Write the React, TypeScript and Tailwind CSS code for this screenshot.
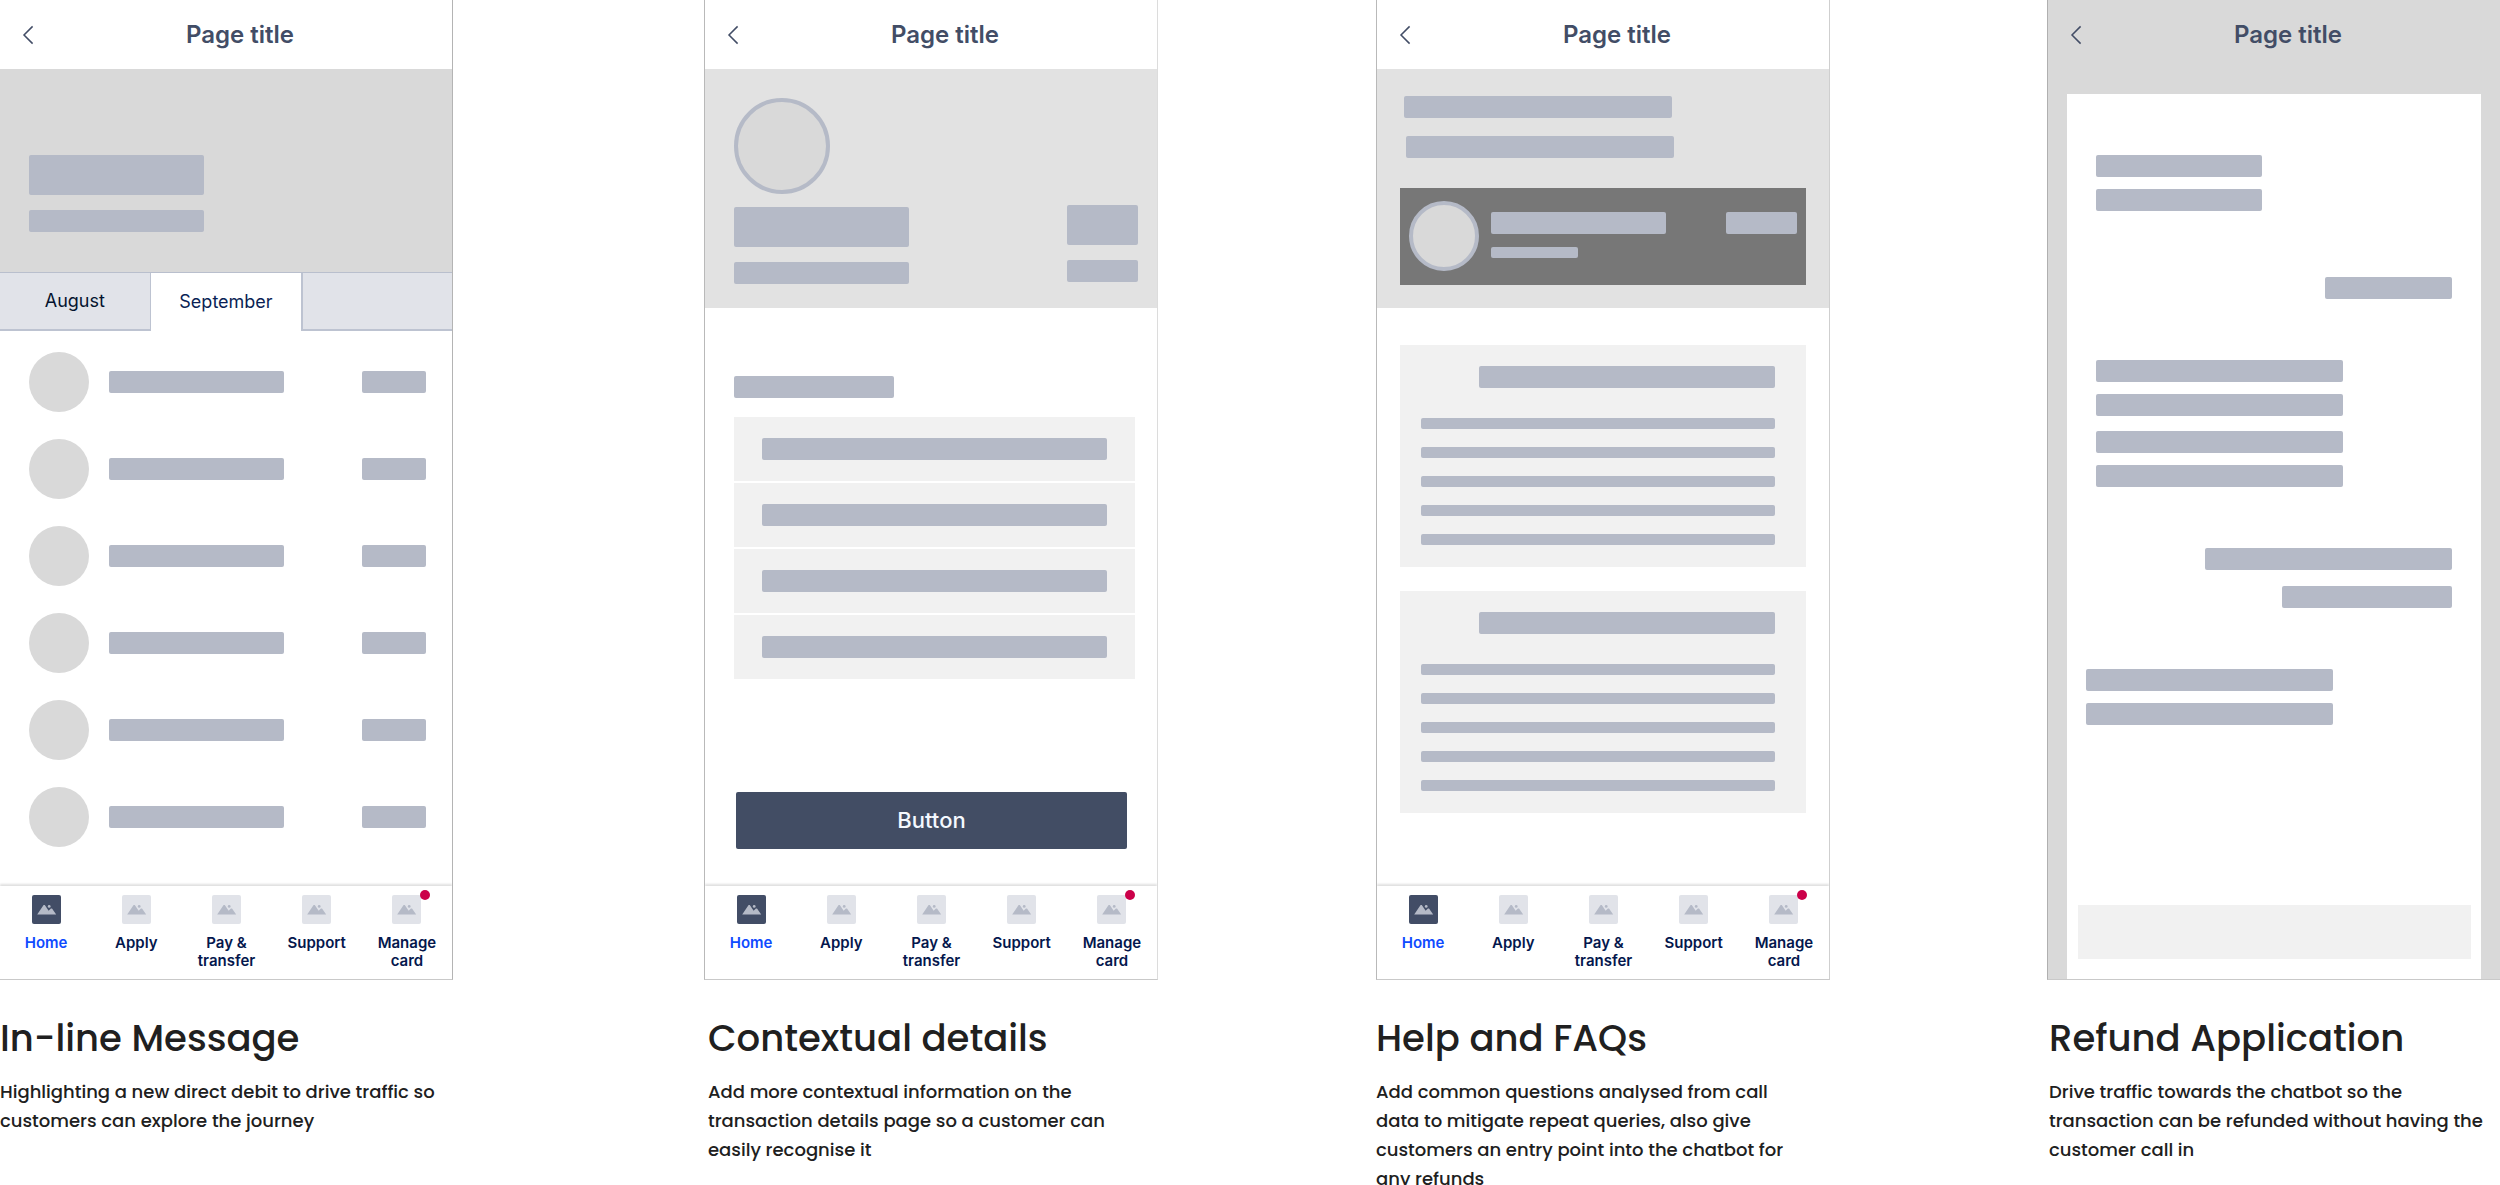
import React from "react";

function cx(...parts: (string | false | undefined)[]) {
  return parts.filter(Boolean).join(" ");
}

/* Placeholder block standing in for a line of content. */
function Bar({ className }: { className?: string }) {
  return <div className={cx("shrink-0 rounded-[2px] bg-[#b5bac7]", className)} />;
}

function Header({ tall }: { tall?: boolean }) {
  return (
    <header className={cx("flex h-[69px] items-center pl-5", tall && "mb-[25px]")}>
      <button type="button" aria-label="Back" className="flex h-8 w-4 items-center justify-center">
        <svg width="16" height="20" viewBox="0 0 16 20" fill="none">
          <path d="M12.6 1.4 L4 10 L12.6 18.6" stroke="#424d66" strokeWidth="1.5" />
        </svg>
      </button>
      <h1 className="flex-1 pr-2 text-center text-2xl font-semibold text-[#424d66]">Page title</h1>
    </header>
  );
}

const NAV_ITEMS = ["Home", "Apply", "Pay & transfer", "Support", "Manage card"];

function PictureIcon({ active }: { active: boolean }) {
  return (
    <svg width="29" height="29" viewBox="0 0 29 29" aria-hidden="true">
      <rect width="29" height="29" rx="2" fill={active ? "#424d66" : "#e1e3e9"} />
      <path d="M5.2 19.6 L11.6 10 H12.8 L16.6 15.7 L18.9 13.4 H20 L24.2 19.6 Z" fill="#b5bac7" />
      <circle cx="17.2" cy="11.4" r="1.4" fill="#b5bac7" />
    </svg>
  );
}

function BottomNav() {
  return (
    <nav className="mt-auto grid h-[93px] grid-cols-5 pt-[9px] pl-px shadow-[0_-2px_2px_#e0e0e0]">
      {NAV_ITEMS.map((label, i) => (
        <a key={label} href="#" className="flex flex-col items-center gap-[10px]">
          <span className="relative">
            <PictureIcon active={i === 0} />
            {i === 4 && (
              <span className="absolute -top-[5px] -right-[9px] size-[10px] rounded-full bg-[#cb0049]" />
            )}
          </span>
          <span
            className={cx(
              "w-[72px] text-center text-[15px] leading-[18px] font-semibold",
              i === 0 ? "text-[#0f4bff]" : "text-[#04174d]",
            )}
          >
            {label}
          </span>
        </a>
      ))}
    </nav>
  );
}

function Screen({ className, children }: { className?: string; children: React.ReactNode }) {
  return (
    <div className={cx("flex min-h-[980px] flex-col overflow-hidden border-b border-b-[#c9c9c9]", className)}>
      {children}
    </div>
  );
}

function Caption({ title, lines, className }: { title: string; lines: string[]; className?: string }) {
  return (
    <div className={cx("pt-[33px] font-[Poppins,Inter,sans-serif] whitespace-nowrap text-[#202020]", className)}>
      <h2 className="text-[37px] leading-[50px] font-medium">{title}</h2>
      <p className="pt-[14px] text-lg leading-[29px] font-medium">
        {lines.map((line) => (
          <span key={line} className="block">
            {line}
          </span>
        ))}
      </p>
    </div>
  );
}

function InlineMessage() {
  return (
    <Screen className="border-r border-r-[#b4b4b4]">
      <Header />
      <div className="flex h-[203px] flex-col gap-[15px] bg-[#d9d9d9] pt-[86px] pl-[29px]">
        <Bar className="h-10 w-[175px]" />
        <Bar className="h-[22px] w-[175px]" />
      </div>
      <div
        role="tablist"
        className="grid h-[59px] grid-cols-3 border-t border-[#b9bfcd] text-lg text-[#04142e]"
      >
        <button role="tab" type="button" className="border-r border-b-2 border-[#bdc3d1] bg-[#e1e3e9]">
          August
        </button>
        <button role="tab" type="button" aria-selected="true" className="bg-white text-[#0b1f55]">
          September
        </button>
        <div className="border-b-2 border-l-2 border-[#bdc3d1] bg-[#e1e3e9]" />
      </div>
      <ul className="flex flex-col gap-[27px] pt-[21px] pr-[26px] pl-[29px]">
        {[0, 1, 2, 3, 4, 5].map((row) => (
          <li key={row} className="flex items-center">
            <div className="mr-5 size-[60px] rounded-full bg-[#d9d9d9]" />
            <Bar className="h-[22px] w-[175px]" />
            <Bar className="ml-auto h-[22px] w-16" />
          </li>
        ))}
      </ul>
      <BottomNav />
    </Screen>
  );
}

function ContextualDetails() {
  return (
    <Screen className="border-x border-r-[#dcdcdc] border-l-[#b9b9b9]">
      <Header />
      <div className="h-[239px] bg-[#e2e2e2] pt-[29px] pr-[19px] pl-[29px]">
        <div className="size-24 rounded-full border-4 border-[#b5bac7] bg-[#d9d9d9]" />
        <div className="flex justify-between pt-[11px]">
          <div className="flex flex-col gap-[15px] pt-[2px]">
            <Bar className="h-10 w-[175px]" />
            <Bar className="h-[22px] w-[175px]" />
          </div>
          <div className="flex flex-col gap-[15px]">
            <Bar className="h-10 w-[71px]" />
            <Bar className="h-[22px] w-[71px]" />
          </div>
        </div>
      </div>
      <div className="flex flex-col pt-[68px] pr-[22px] pl-[29px]">
        <Bar className="h-[22px] w-40" />
        <ul className="mt-[19px] flex flex-col gap-[2px]">
          {[0, 1, 2, 3].map((row) => (
            <li key={row} className="bg-[#f1f1f1] px-7 py-[21px]">
              <Bar className="h-[22px]" />
            </li>
          ))}
        </ul>
      </div>
      <div className="pt-[113px] pr-[30px] pl-[31px]">
        <button
          type="button"
          className="h-[57px] w-full rounded-[2px] bg-[#424d64] text-[22px] font-medium text-[#f4f9ff]"
        >
          Button
        </button>
      </div>
      <BottomNav />
    </Screen>
  );
}

function FaqCard() {
  return (
    <article className="bg-[#f1f1f1] pt-[21px] pr-[31px] pb-[22px] pl-[21px]">
      <Bar className="ml-[58px] h-[22px]" />
      <div className="flex flex-col gap-[18px] pt-[30px]">
        {[0, 1, 2, 3, 4].map((line) => (
          <Bar key={line} className="h-[11px]" />
        ))}
      </div>
    </article>
  );
}

function HelpAndFaqs() {
  return (
    <Screen className="border-x border-r-[#cfcfcf] border-l-[#b9b9b9]">
      <Header />
      <div className="h-[239px] bg-[#e2e2e2] px-[23px] pt-[27px]">
        <div className="flex flex-col gap-[18px] pl-1">
          <Bar className="h-[22px] w-[268px]" />
          <Bar className="ml-[2px] h-[22px] w-[268px]" />
        </div>
        <div className="mt-[30px] flex h-[97px] bg-[#777777] px-[9px] pt-[13px]">
          <div className="size-[70px] rounded-full border-4 border-[#b5bac7] bg-[#d9d9d9]" />
          <div className="flex flex-col gap-[13px] pt-[11px] pl-3">
            <Bar className="h-[22px] w-[175px]" />
            <Bar className="h-[11px] w-[87px]" />
          </div>
          <Bar className="mt-[11px] ml-auto h-[22px] w-[71px]" />
        </div>
      </div>
      <div className="flex flex-col gap-6 px-[23px] pt-[37px]">
        <FaqCard />
        <FaqCard />
      </div>
      <BottomNav />
    </Screen>
  );
}

function RefundApplication() {
  return (
    <Screen className="border-l border-l-[#b0b0b0] bg-[#d9d9d9]">
      <Header tall />
      <div className="mx-[19px] flex flex-1 flex-col bg-white pt-[61px]">
        <div className="flex flex-col px-[29px]">
          <div className="flex flex-col gap-3">
            <Bar className="h-[22px] w-[166px]" />
            <Bar className="h-[22px] w-[166px]" />
          </div>
          <Bar className="mt-[66px] h-[22px] w-[127px] self-end" />
          <div className="flex flex-col gap-3 pt-[61px]">
            <Bar className="h-[22px] w-[247px]" />
            <Bar className="h-[22px] w-[247px]" />
          </div>
          <div className="flex flex-col gap-3 pt-[15px]">
            <Bar className="h-[22px] w-[247px]" />
            <Bar className="h-[22px] w-[247px]" />
          </div>
          <div className="flex flex-col items-end gap-4 pt-[61px]">
            <Bar className="h-[22px] w-[247px]" />
            <Bar className="h-[22px] w-[170px]" />
          </div>
        </div>
        <div className="flex flex-col gap-3 pt-[61px] pl-[19px]">
          <Bar className="h-[22px] w-[247px]" />
          <Bar className="h-[22px] w-[247px]" />
        </div>
        <div className="mt-auto pr-[10px] pb-5 pl-[11px]">
          <input
            type="text"
            aria-label="Message"
            className="block h-[54px] w-full bg-[#f1f1f1] px-4 text-lg outline-none"
          />
        </div>
      </div>
    </Screen>
  );
}

export default function App() {
  return (
    <main className="grid grid-cols-[453fr_251fr_454fr_218fr_454fr_217fr_453fr] overflow-hidden bg-white font-[Inter,sans-serif]">
      <section className="min-w-0">
        <InlineMessage />
        <Caption
          title="In-line Message"
          lines={["Highlighting a new direct debit to drive traffic so", "customers can explore the journey"]}
        />
      </section>
      <section className="col-start-3 min-w-0">
        <ContextualDetails />
        <Caption
          className="pl-1"
          title="Contextual details"
          lines={[
            "Add more contextual information on the",
            "transaction details page so a customer can",
            "easily recognise it",
          ]}
        />
      </section>
      <section className="col-start-5 min-w-0">
        <HelpAndFaqs />
        <Caption
          title="Help and FAQs"
          lines={[
            "Add common questions analysed from call",
            "data to mitigate repeat queries, also give",
            "customers an entry point into the chatbot for",
            "any refunds",
          ]}
        />
      </section>
      <section className="col-start-7 min-w-0">
        <RefundApplication />
        <Caption
          className="pl-[2px]"
          title="Refund Application"
          lines={[
            "Drive traffic towards the chatbot so the",
            "transaction can be refunded without having the",
            "customer call in",
          ]}
        />
      </section>
    </main>
  );
}
